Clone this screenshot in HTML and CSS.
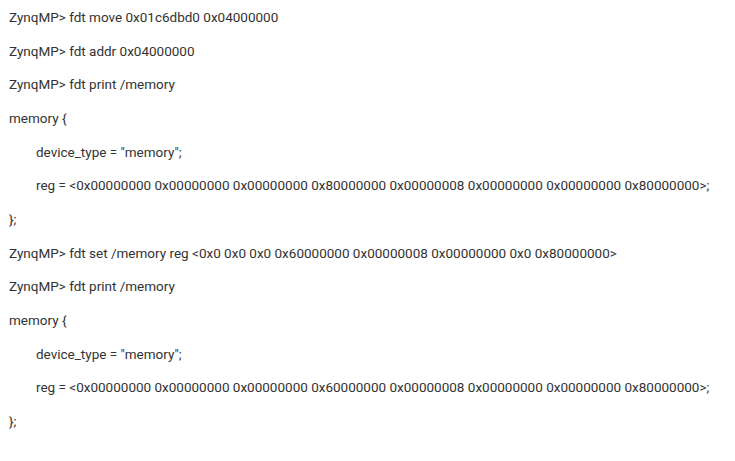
FILE: index.html
```html
<!DOCTYPE html>
<html>
<head>
<meta charset="utf-8">
<link rel="stylesheet" href="styles.css">
</head>
<body>
<div class="log">
<p class="line">ZynqMP&gt; fdt move 0x01c6dbd0 0x04000000</p>
<p class="line">ZynqMP&gt; fdt addr 0x04000000</p>
<p class="line">ZynqMP&gt; fdt print /memory</p>
<p class="line">memory {</p>
<p class="line indent">device_type = "memory";</p>
<p class="line indent">reg = &lt;0x00000000 0x00000000 0x00000000 0x80000000 0x00000008 0x00000000 0x00000000 0x80000000&gt;;</p>
<p class="line">};</p>
<p class="line">ZynqMP&gt; fdt set /memory reg &lt;0x0 0x0 0x0 0x60000000 0x00000008 0x00000000 0x0 0x80000000&gt;</p>
<p class="line">ZynqMP&gt; fdt print /memory</p>
<p class="line">memory {</p>
<p class="line indent">device_type = "memory";</p>
<p class="line indent">reg = &lt;0x00000000 0x00000000 0x00000000 0x60000000 0x00000008 0x00000000 0x00000000 0x80000000&gt;;</p>
<p class="line">};</p>
</div>
</body>
</html>
```
FILE: styles.css
```css
html, body {
  margin: 0;
  padding: 0;
  background: #ffffff;
}
.log {
  padding: 1px 9px 0 9px;
  font-family: Roboto, "Liberation Sans", sans-serif;
  font-size: 13.5px;
  color: #333333;
}
.line {
  margin: 0;
  line-height: 33.67px;
  white-space: nowrap;
}
.indent {
  padding-left: 27px;
}
```
